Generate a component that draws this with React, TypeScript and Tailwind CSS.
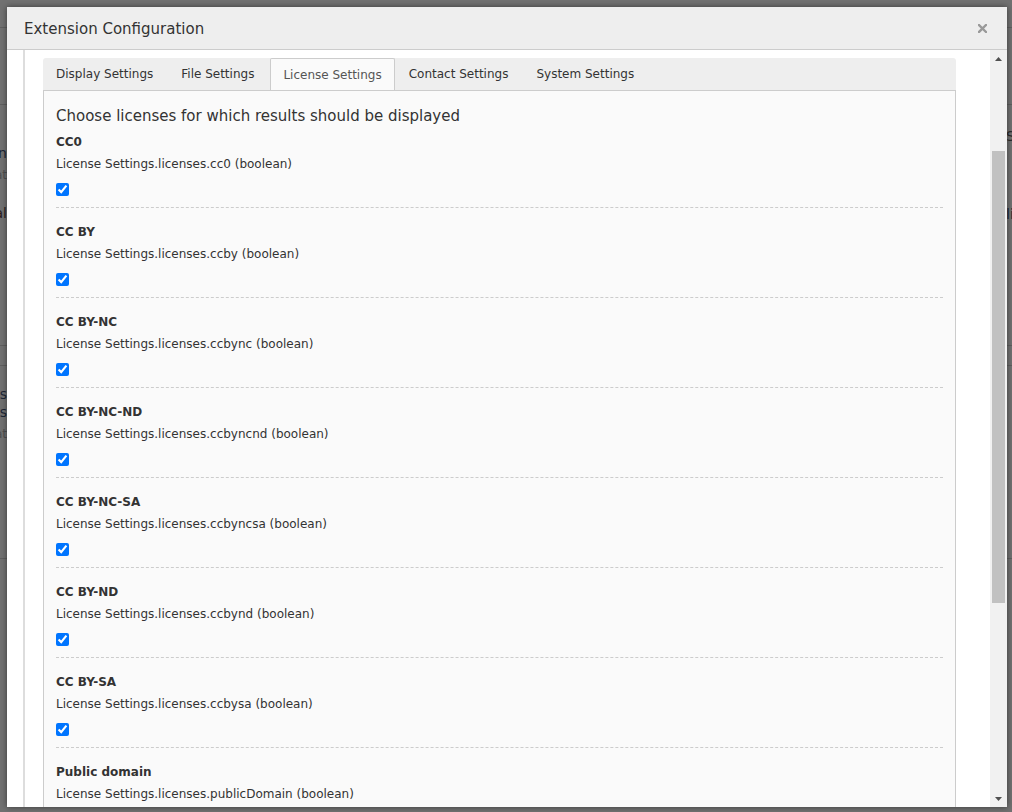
import React from 'react';

const tabs = ['Display Settings', 'File Settings', 'License Settings', 'Contact Settings', 'System Settings'];

const licenses = [
  { title: 'CC0', key: 'cc0' },
  { title: 'CC BY', key: 'ccby' },
  { title: 'CC BY-NC', key: 'ccbync' },
  { title: 'CC BY-NC-ND', key: 'ccbyncnd' },
  { title: 'CC BY-NC-SA', key: 'ccbyncsa' },
  { title: 'CC BY-ND', key: 'ccbynd' },
  { title: 'CC BY-SA', key: 'ccbysa' },
  { title: 'Public domain', key: 'publicDomain' },
];

function Backdrop() {
  return (
    <div className="flex flex-col h-full">
      <div className="h-[28px] border-b border-[#5f5f5f]" />
      <div className="h-[77px] border-b border-[#5f5f5f]" />
      <div className="h-[241px] border-b border-[#5f5f5f] flex justify-between">
        <div className="w-[7px] overflow-hidden flex flex-col items-end pt-[37px] text-[14px] leading-[22px] whitespace-nowrap">
          <span className="text-[#1c2636]">Information</span>
          <span className="text-[#4f4f4f] text-[12px]">Configurat</span>
          <span className="text-[#2a1c1c] mt-[16px]">Manual</span>
        </div>
        <div className="w-[6px] overflow-hidden flex flex-col items-start pt-[20px] text-[14px] leading-[22px] whitespace-nowrap">
          <span className="text-[#2a2a2a]">Settings</span>
          <span className="text-[#1c2636] mt-[56px]">list</span>
        </div>
      </div>
      <div className="h-[20px] border-b border-[#5f5f5f]" />
      <div className="h-[193px] border-b border-[#5f5f5f] flex">
        <div className="w-[7px] overflow-hidden flex flex-col items-end pt-[19px] text-[14px] leading-[18px] whitespace-nowrap">
          <span className="text-[#1c2636]">Extensions</span>
          <span className="text-[#1c2636]">Extensions</span>
          <span className="text-[#4f4f4f] text-[12px] mt-[4px]">Configurat</span>
        </div>
      </div>
      <div className="flex-1" />
    </div>
  );
}

function Scrollbar() {
  return (
    <div className="w-[17px] shrink-0 bg-[#f1f1f1] flex flex-col">
      <div className="h-[17px] flex items-center justify-center">
        <svg width="7" height="4" viewBox="0 0 7 4">
          <path d="M3.5 0 L7 4 L0 4 Z" fill="#505050" />
        </svg>
      </div>
      <div className="flex-1 pt-[84px]">
        <div className="h-[452px] mx-[2px] bg-[#c1c1c1]" />
      </div>
      <div className="h-[17px] flex items-center justify-center">
        <svg width="7" height="4" viewBox="0 0 7 4">
          <path d="M0 0 L7 0 L3.5 4 Z" fill="#505050" />
        </svg>
      </div>
    </div>
  );
}

export default function App() {
  return (
    <div className="relative w-[1012px] h-[812px] overflow-hidden bg-[#717171] font-['DejaVu_Sans',sans-serif] text-[#333333]">
      <Backdrop />
      <div className="absolute left-[7px] top-[7px] w-[1000px] h-[800px] bg-white flex flex-col overflow-hidden shadow-[0_0_6px_rgba(0,0,0,0.5)]">
        <div className="h-[43px] shrink-0 bg-[#eeeeee] border-b border-[#cccccc] flex items-center justify-between pl-[17px] pr-[20px]">
          <h4 className="text-[15px] leading-[20px] text-[#333333] pt-[2px]">Extension Configuration</h4>
          <svg width="9" height="9" viewBox="0 0 9 9">
            <path d="M1 1 L8 8 M8 1 L1 8" stroke="#999999" strokeWidth="2.4" strokeLinecap="square" />
          </svg>
        </div>
        <div className="flex-1 min-h-0 flex">
          <div className="flex-1 min-w-0 overflow-hidden flex pl-[16px]">
            <div className="w-[2px] shrink-0 bg-[#dddddd]" />
            <div className="pl-[18px] pt-[8px] w-[931px]">
              <div className="h-[33px] flex bg-[#eeeeee] rounded-t-[3px] border-b border-[#cccccc]">
                {tabs.map((t) => (
                  <div
                    key={t}
                    className={
                      t === 'License Settings'
                        ? 'px-[12px] mx-[1px] flex items-center text-[12px] bg-[#fafafa] border-x border-t border-[#cccccc] rounded-t-[2px] text-[#555555]'
                        : 'px-[13px] mr-[2px] flex items-center text-[12px] text-[#333333]'
                    }
                  >
                    {t}
                  </div>
                ))}
              </div>
              <div className="bg-[#fafafa] border-x border-[#cccccc] px-[12px] pt-[14px] pb-[20px]">
                <h3 className="text-[15px] leading-[22px] text-[#333333]">
                  Choose licenses for which results should be displayed
                </h3>
                {licenses.map((l, i) => (
                  <div
                    key={l.key}
                    className={i === 0 ? 'pt-[6px] pb-[11px] border-b border-dashed border-[#cccccc]' : 'pt-[15px] pb-[11px] border-b border-dashed border-[#cccccc]'}
                  >
                    <div className="text-[12px] leading-[18px] font-bold text-[#333333]">{l.title}</div>
                    <div className="mt-[4px] text-[12px] leading-[18px] text-[#333333]">
                      License Settings.licenses.{l.key} (boolean)
                    </div>
                    <div className="mt-[10px] h-[13px]">
                      <input type="checkbox" defaultChecked className="m-0 block w-[13px] h-[13px] accent-[#0075ff]" />
                    </div>
                  </div>
                ))}
              </div>
            </div>
          </div>
          <Scrollbar />
        </div>
      </div>
    </div>
  );
}
